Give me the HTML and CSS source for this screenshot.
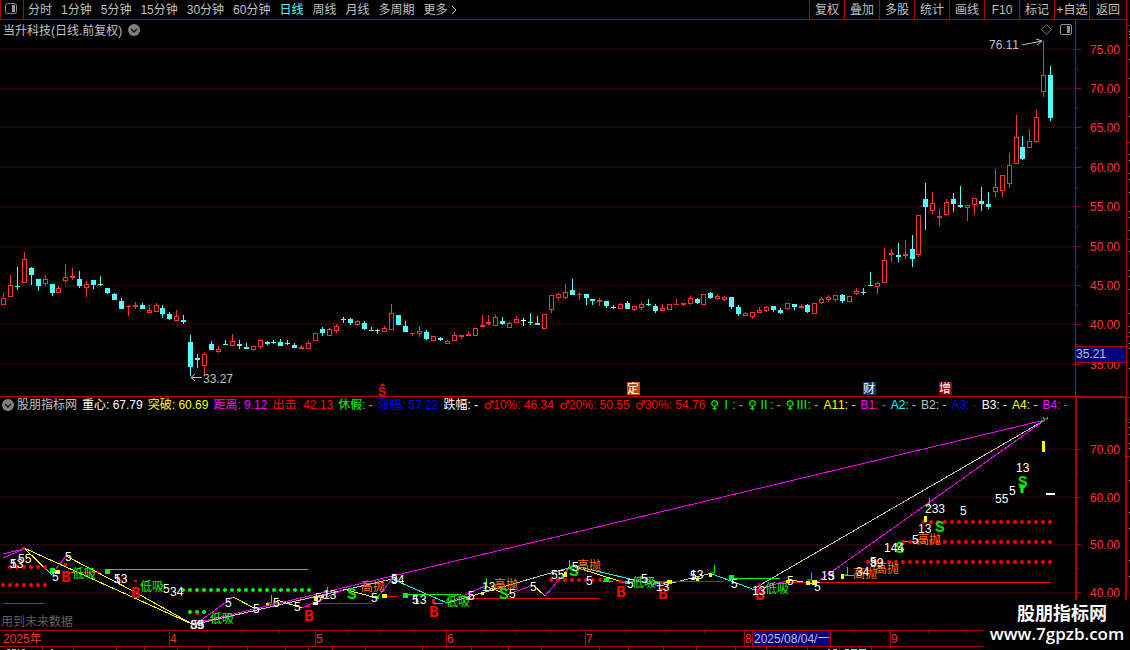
FILE: index.html
```html
<!DOCTYPE html>
<html lang="zh-CN">
<head>
  <meta charset="UTF-8">
  <title>当升科技 日线</title>
  <link rel="stylesheet" href="styles.css">
</head>
<body>
  <div class="terminal">
    <main class="main">
      <nav class="toolbar">
        <button class="side-toggle" aria-label="侧栏">
          <svg width="12" height="12" viewBox="0 0 12 12"><rect x="0.5" y="0.5" width="11" height="10" rx="2" fill="none" stroke="#888"/><rect x="7" y="2" width="3" height="7" fill="#999"/></svg>
        </button>
        <div class="periods">
          <button>分时</button>
          <button>1分钟</button>
          <button>5分钟</button>
          <button>15分钟</button>
          <button>30分钟</button>
          <button>60分钟</button>
          <button class="active">日线</button>
          <button>周线</button>
          <button>月线</button>
          <button>多周期</button>
          <button class="more">更多<svg width="6" height="10" viewBox="0 0 6 10"><path d="M1 1l4 4-4 4" fill="none" stroke="#c0c0c0"/></svg></button>
        </div>
        <div class="tools">
          <button>复权</button>
          <button>叠加</button>
          <button>多股</button>
          <button>统计</button>
          <button>画线</button>
          <button>F10</button>
          <button>标记</button>
          <button>+自选</button>
          <button>返回</button>
        </div>
      </nav>

      <section class="panel price">
        <div class="chart">
          <header class="title">
            <span>当升科技(日线.前复权)</span>
            <button class="fold" aria-label="展开">
              <svg width="12" height="12" viewBox="0 0 12 12"><circle cx="6" cy="6" r="6" fill="#808080"/><path d="M3 5l3 3 3-3" fill="none" stroke="#111" stroke-width="1.4"/></svg>
            </button>
            <div class="title-icons">
              <svg width="11" height="11" viewBox="0 0 11 11"><path d="M5.5 .7l4.8 4.8-4.8 4.8L.7 5.5z" fill="none" stroke="#808080"/></svg>
              <svg width="12" height="12" viewBox="0 0 12 12"><rect x="0.5" y="0.5" width="11" height="10" rx="1.5" fill="none" stroke="#909090"/><rect x="7" y="2" width="3" height="7" fill="#909090"/></svg>
            </div>
          </header>
          <svg class="plot price-plot" id="pricePlot" viewBox="0 39 1075 357" preserveAspectRatio="xMaxYMin meet"></svg>
        </div>
        <svg class="axis" id="priceAxis" viewBox="1075 20 51 376" width="51" height="376"></svg>
      </section>

      <section class="panel indicator">
        <div class="chart">
          <header class="legend">
            <button class="fold" aria-label="展开">
              <svg width="12" height="12" viewBox="0 0 12 12"><circle cx="6" cy="6" r="6" fill="#808080"/><path d="M3 5l3 3 3-3" fill="none" stroke="#111" stroke-width="1.4"/></svg>
            </button>
            <div class="values">
              <span class="gray">股朋指标网</span>
              <span class="white">重心: 67.79</span>
              <span class="yellow">突破: 60.69</span>
              <span class="magenta">距离: 9.12</span>
              <span class="red">出击: 42.13</span>
              <span class="green">休假: -</span>
              <span class="blue">涨幅: 57.22</span>
              <span class="white">跌幅: -</span>
              <span class="red"><i>♂</i>10%: 46.34</span>
              <span class="red"><i>♂</i>20%: 50.55</span>
              <span class="red"><i>♂</i>30%: 54.76</span>
              <span class="green"><i>♀</i>Ⅰ: -</span>
              <span class="green"><i>♀</i>Ⅱ: -</span>
              <span class="green"><i>♀</i>Ⅲ: -</span>
              <span class="yellow">A11: -</span>
              <span class="magenta">B1: -</span>
              <span class="cyan">A2: -</span>
              <span class="gray">B2: -</span>
              <span class="blue">A3: -</span>
              <span class="white">B3: -</span>
              <span class="yellow">A4: -</span>
              <span class="magenta">B4: -</span>
            </div>
          </header>
          <svg class="plot signal-plot" id="signalPlot" viewBox="0 413 1075 217" preserveAspectRatio="xMaxYMin meet"></svg>
        </div>
        <svg class="axis" id="signalAxis" viewBox="1075 397 51 233" width="51" height="233"></svg>
      </section>

      <svg class="dates" id="dates" viewBox="0 630 1126 20" preserveAspectRatio="xMaxYMin meet"></svg>
    </main>
    <svg class="edge" id="edge" viewBox="1127 0 3 650" width="3" height="650"></svg>
    <div class="brand">
      <strong>股朋指标网</strong>
      <span>www.7gpzb.com</span>
    </div>
  </div>
  <script src="chart.js"></script>
</body>
</html>
```

FILE: styles.css
```css
body { margin: 0; background: #000; overflow: hidden; font-family: "Liberation Sans", "Noto Sans CJK SC", sans-serif; font-size: 12px; font-kerning: none; color: #c0c0c0; }
button { background: none; border: 0; padding: 0; margin: 0; font: inherit; color: inherit; cursor: pointer; }
svg { display: block; flex: none; }
.terminal { position: relative; display: grid; grid-template-columns: minmax(0, 1fr) 3px; }
.main { border-right: 1px solid #b00000; }

/* toolbar */
.toolbar { display: flex; height: 19px; line-height: 18px; border-bottom: 1px solid #b00000; white-space: nowrap; }
.side-toggle { width: 24px; padding: 3px 0 0 4px; box-sizing: border-box; border-left: 1px solid #b00000; border-right: 1px solid #b00000; display: flex; }
.periods { display: flex; gap: 9px; margin-left: 4px; }
.active { color: #54ffff; }
.more { display: flex; align-items: center; gap: 3px; }
.tools { display: flex; margin-left: auto; }
.tools button { width: 35px; border-left: 1px solid #b00000; }
.tools button:last-child { width: 37px; }

/* panels */
.panel { display: grid; grid-template-columns: minmax(0, 1fr) 51px; }
.price { border-bottom: 1px solid #b00000; }
.title { display: flex; align-items: center; height: 19px; padding: 0 3px; gap: 6px; }
.title-icons { display: flex; gap: 8px; margin-left: auto; }
.legend { display: flex; align-items: center; height: 16px; padding-left: 2px; gap: 3px; line-height: 16px; white-space: nowrap; }
.values { display: flex; gap: 5px; }
.values i { display: inline-block; width: 10px; font: 12px/12px "DejaVu Sans", sans-serif; }
.fold { display: flex; }
.plot { width: 100%; overflow: visible; }
.price-plot { height: 357px; }
.signal-plot { height: 217px; }
.dates { width: 100%; height: 20px; }

.white { color: #fff; }
.yellow { color: #ff0; }
.magenta { color: #f0f; }
.red { color: #f00; }
.green { color: #0f0; }
.blue { color: #0000ff; }
.cyan { color: #0ff; }
.gray { color: #c0c0c0; }

/* svg text */
.tick-label { fill: #ff3232; }
.note { fill: #c0c0c0; }
.dim { fill: #606060; }
.num { fill: #fff; }
.buy { fill: #0f0; }
.sell { fill: #ff7800; }
.mark-b, .mark-s { font: bold 16px "Liberation Mono", monospace; }
.mark-b { fill: #f00; }
.mark-s { fill: #00e000; }
.event { fill: #f00; font-weight: bold; }

/* site mark */
.brand { position: absolute; right: 0; bottom: 0; width: 146px; height: 50px; background: #000; color: #fff; text-align: center; line-height: 19px; padding-top: 5px; box-sizing: border-box; }
.brand strong, .brand span { display: block; font-size: 18px; }
.brand strong { padding-left: 10px; }
.brand span { font-family: "Open Sans", sans-serif; font-weight: 600; font-size: 17px; }
```

FILE: chart.js
```js
const RED = '#ff3232', LINE = '#b00000', CYAN = '#54ffff';
const NS = 'http://www.w3.org/2000/svg';

function add(parent, tag, attrs, text) {
  const el = document.createElementNS(NS, tag);
  for (const k in attrs) el.setAttribute(k, attrs[k]);
  if (text !== undefined) el.textContent = text;
  parent.appendChild(el);
  return el;
}
function rect(p, x, y, w, h, fill) {
  add(p, 'rect', { x, y, width: w, height: h, fill, 'shape-rendering': 'crispEdges' });
}
// y is the vertical middle of the text
function label(p, x, y, cls, text) {
  const big = cls.startsWith('mark-');
  add(p, 'text', { x, y: y + (big ? 5 : 4), class: cls }, text);
}
function poly(p, points, color) {
  add(p, 'polyline', { points, fill: 'none', stroke: color, 'shape-rendering': 'crispEdges' });
}
function grid(p, rows) {
  rows.forEach(y => add(p, 'line', { x1: 1, x2: 1075, y1: y + 0.5, y2: y + 0.5, stroke: LINE, 'stroke-dasharray': '1 3', 'shape-rendering': 'crispEdges' }));
}

const pricePlot = document.getElementById('pricePlot');
const signalPlot = document.getElementById('signalPlot');
const priceAxis = document.getElementById('priceAxis');
const signalAxis = document.getElementById('signalAxis');
const dates = document.getElementById('dates');
const edge = document.getElementById('edge');

// x, high, body top, body bottom, low, r = up / c = down / w = flat
const candles = `
3 293 298 305 305 r|10 275 285 297 297 r|17 267 286 287 290 c|24 252 259 283 283 r|31 267 268 275 285 c
38 279 279 286 291 c|45 275 279 284 286 r|52 284 284 293 296 c|58 286 288 293 293 r|65 264 277 281 283 r
72 268 276 278 280 r|79 271 279 286 288 c|86 281 284 288 297 r|93 280 280 285 289 c|100 276 284 285 286 c
107 288 288 293 294 c|114 293 294 300 300 c|121 298 301 309 309 c|128 305 306 307 316 r|135 302 305 307 309 r
142 303 305 309 309 c|149 305 310 313 313 r|156 303 305 312 312 r|162 305 308 314 318 c|169 312 314 319 320 c
176 310 316 321 321 r|183 315 320 322 324 c|190 335 342 367 376 c|197 354 358 360 368 c|204 352 354 366 375 r
211 341 344 350 350 c|218 346 349 352 353 r|225 340 344 345 345 c|232 334 341 346 346 r|239 340 344 346 349 c
246 343 347 349 349 c|253 346 346 350 351 r|260 340 340 347 349 r|267 341 342 344 345 c|273 340 342 343 344 c
280 339 342 346 346 c|287 340 343 344 345 c|294 343 345 348 348 c|301 345 347 349 349 r|308 341 343 349 349 r
315 333 333 341 341 r|322 327 329 333 336 c|329 328 329 336 336 r|336 324 326 331 333 r|343 317 319 320 323 c
350 318 319 323 325 c|357 320 321 325 326 r|364 321 323 329 330 c|371 327 330 331 331 c|377 329 330 331 334 c
384 326 328 332 332 r|391 304 313 330 330 r|398 315 315 325 325 c|405 321 326 332 332 c|412 333 333 334 336 r
419 326 331 334 337 r|426 330 332 339 340 c|433 336 336 341 341 r|440 337 338 340 341 c|447 340 341 344 344 r
454 332 335 341 341 r|461 335 335 337 339 r|468 331 334 336 336 r|475 328 328 336 336 r|482 315 325 327 327 r
488 315 322 324 325 r|495 315 317 326 326 r|502 317 321 324 325 c|509 322 323 328 328 r|516 316 319 323 323 r
523 318 320 321 326 w|530 313 322 323 325 c|537 316 323 325 325 c|544 314 314 329 329 r|551 295 295 310 313 r
558 293 294 298 300 r|565 284 292 298 299 r|572 279 290 295 295 c|579 292 294 295 300 r|586 294 294 298 305 c
592 299 299 301 305 c|599 298 300 302 306 r|606 301 301 306 308 c|613 305 307 308 309 c|620 303 304 309 309 r
627 301 303 309 309 c|634 306 306 310 311 r|641 302 304 308 310 r|648 299 304 305 306 c|655 304 306 311 313 c
662 304 308 311 311 r|669 304 304 310 310 r|676 299 304 305 305 r|683 303 303 305 306 r|690 296 298 304 305 r
697 298 299 303 304 c|703 294 294 305 305 r|710 292 293 298 299 c|717 294 296 299 300 r|724 296 297 300 301 r
731 297 297 307 309 c|738 305 307 314 316 c|745 312 313 316 316 r|752 312 312 317 319 r|759 307 310 313 313 r
766 306 307 311 312 r|773 306 306 310 312 c|780 308 310 313 314 c|787 303 303 309 310 r|794 304 304 307 310 c
801 304 306 308 309 r|807 304 305 312 313 c|814 303 303 314 314 r|821 297 299 303 304 r|828 295 297 300 302 r
835 295 295 300 302 r|842 294 295 301 303 c|849 296 296 302 302 r|856 288 291 294 295 r|863 288 292 293 295 c
870 272 285 286 286 c|877 282 283 287 294 r|884 248 260 283 283 r|891 249 253 255 262 r|898 243 255 257 262 c
905 240 254 256 259 r|912 235 249 259 267 c|918 215 215 255 257 r|925 183 199 207 230 c|932 192 203 211 214 r
939 209 216 218 226 r|946 199 202 215 216 r|953 193 199 204 212 c|960 186 205 207 208 c|967 205 205 208 221 r
974 198 198 205 215 r|981 187 201 204 211 c|988 192 204 207 209 c|995 169 187 192 197 r|1002 175 175 191 197 r
1009 153 165 184 188 r|1016 115 137 164 164 r|1022 136 147 159 160 c|1029 129 141 148 148 r|1036 110 117 142 143 r
1043 41 75 92 97 r|1050 66 75 118 121 c`;

// ---- price chart ----
grid(pricePlot, [49, 88, 127, 167, 206, 246, 285, 324, 364]);
candles.trim().split(/[|\n]/).forEach(row => {
  const c = row.split(' ');
  const [x, high, top, bottom, low] = c.map(Number);
  const color = { r: RED, c: CYAN, w: '#fff' }[c[5]];
  rect(pricePlot, x, high, 1, top - high, color);
  rect(pricePlot, x, bottom, 1, low - bottom, color);
  rect(pricePlot, x - 2, top, 5, bottom - top, color);
  if (c[5] === 'r' && bottom - top > 2) rect(pricePlot, x - 1, top + 1, 3, bottom - top - 2, '#000');
});
label(pricePlot, 989, 45, 'note', '76.11');
add(pricePlot, 'path', { d: 'M1022 45l20-4M1036 39l6 2-5 4', fill: 'none', stroke: '#c0c0c0' });
label(pricePlot, 203, 379, 'note', '33.27');
add(pricePlot, 'path', { d: 'M202 377.5h-11M195 374l-4 3.5 4 3.5', fill: 'none', stroke: '#c0c0c0' });
[[627, '定', '#c04a10'], [863, '财', '#003a70'], [939, '增', '#8b0000']].forEach(([x, t, bg]) => {
  rect(pricePlot, x, 382, 13, 13, bg);
  add(pricePlot, 'text', { x, y: 393, class: 'num' }, t);
});
add(pricePlot, 'path', { d: 'M382.5 383l-3 3h6z', fill: '#f00' });
add(pricePlot, 'text', { x: 378, y: 396, class: 'event' }, 'S');

rect(priceAxis, 1075, 20, 1, 376, LINE);
[[49, '75.00'], [88, '70.00'], [127, '65.00'], [167, '60.00'], [206, '55.00'], [246, '50.00'], [285, '45.00'], [324, '40.00'], [364, '35.00']].forEach(([y, t]) => {
  rect(priceAxis, 1076, y, 5, 1, LINE);
  if (y < 350) rect(priceAxis, 1076, y + 20, 2, 1, LINE);
  label(priceAxis, 1090, y + 1, 'tick-label', t);
});
rect(priceAxis, 1076, 346, 50, 17, LINE);
rect(priceAxis, 1076, 347, 50, 15, '#000080');
label(priceAxis, 1076, 354, 'note', '35.21');

// ---- indicator chart ----
grid(signalPlot, [449, 497, 544, 592]);
[
  ['24,548 192,624', '#ff0'],
  ['3,554 24,549', '#f0f'],
  ['3,558 24,549', '#f0f'],
  ['24,548 52,575', '#ff0'],
  ['52,574 66,556', '#f0f'],
  ['66,556 133,591 192,624', '#ff0'],
  ['196,624 392,579', '#c0c0c0'],
  ['196,624 233,597', '#f0f'],
  ['233,597 256,609', '#ff0'],
  ['256,609 277,603', '#f0f'],
  ['277,600 302,608', '#ff0'],
  ['302,608 343,590', '#f0f'],
  ['196,623 1045,420', '#f0f'],
  ['343,589 377,598', '#ff0'],
  ['377,598 392,579', '#f0f'],
  ['392,579 447,603', '#0ff'],
  ['447,603 485,586', '#f0f'],
  ['447,603 575,566', '#c0c0c0'],
  ['485,586 509,595', '#ff0'],
  ['509,594 533,585', '#f0f'],
  ['533,585 545,596', '#ff0'],
  ['545,596 570,567', '#f0f'],
  ['575,567 622,582', '#ff0'],
  ['575,566 660,586', '#0ff'],
  ['622,582 630,583 645,577 658,587', '#f0f'],
  ['660,586 712,573', '#c0c0c0'],
  ['712,574 755,590', '#0ff'],
  ['755,588 1045,420', '#c0c0c0'],
  ['755,590 790,580', '#f0f'],
  ['790,580 816,584', '#ff0'],
  ['816,583 1045,420', '#f0f']
].forEach(([pts, color]) => poly(signalPlot, pts, color));

// horizontal levels: x1, x2, y, color
[
  [3, 45, 603, '#f00'], [62, 100, 572, '#f00'], [105, 308, 569, '#0f0'], [314, 371, 603, '#f00'],
  [385, 398, 596, '#f00'], [405, 461, 594, '#0f0'], [433, 443, 603, '#0f0'], [467, 599, 598, '#f00'],
  [603, 613, 581, '#0f0'], [620, 724, 581, '#f00'], [732, 780, 578, '#0f0'], [788, 1050, 582, '#f00'],
  [845, 854, 575, '#ff7800'], [905, 915, 541, '#ff7800']
].forEach(([x1, x2, y, color]) => rect(signalPlot, x1, y, x2 - x1, 1, color));

// dotted levels: first x, last x, y, color
[
  [10, 45, 567, '#f00'], [3, 45, 585, '#f00'], [183, 309, 590, '#0f0'], [190, 204, 612, '#0f0'],
  [551, 600, 580, '#f00'], [924, 1050, 522, '#f00'], [903, 1050, 542, '#f00'], [868, 1050, 562, '#f00']
].forEach(([x1, x2, y, color]) => {
  for (let x = x1; x <= x2; x += 7) add(signalPlot, 'circle', { cx: x, cy: y, r: 2, fill: color });
});

const Y = '#ff0', G = '#0f0', R = '#f00', W = '#fff';
[
  [50, 568, 5, 5, G], [55, 570, 5, 4, Y], [105, 569, 5, 5, G], [64, 563, 3, 3, R], [134, 580, 3, 2, R],
  [22, 547, 3, 3, R], [196, 613, 3, 2, R], [266, 603, 3, 2, Y], [314, 597, 4, 4, Y], [313, 602, 5, 3, W],
  [307, 604, 3, 3, R], [321, 595, 3, 3, Y], [375, 596, 4, 3, G], [382, 594, 5, 4, Y], [403, 593, 5, 5, G],
  [432, 599, 3, 4, R], [466, 597, 4, 3, Y], [481, 592, 3, 3, Y], [564, 572, 3, 5, Y], [604, 578, 5, 3, G],
  [619, 580, 3, 3, R], [625, 581, 5, 3, G], [654, 581, 4, 3, G], [661, 581, 3, 3, R], [667, 580, 5, 3, Y],
  [696, 578, 3, 3, Y], [709, 573, 3, 4, Y], [729, 575, 5, 5, G], [758, 583, 3, 3, R], [786, 580, 4, 3, Y],
  [806, 581, 4, 4, Y], [812, 580, 5, 5, Y], [841, 574, 3, 5, Y], [924, 516, 3, 6, Y],
  [1042, 441, 3, 11, Y], [1046, 493, 9, 2, W]
].forEach(b => rect(signalPlot, ...b));

// small hooks: x, top, height
[[271, 595, 8], [327, 587, 8], [486, 578, 10], [569, 560, 9], [714, 565, 8], [811, 573, 7], [847, 567, 8], [929, 498, 8]].forEach(([x, y, h]) => {
  add(signalPlot, 'path', { d: `M${x + 0.5} ${y}v${h}h-4`, fill: 'none', stroke: G });
});
add(signalPlot, 'path', { d: 'M1043.5 417v2h4v-2', fill: 'none', stroke: G });

[[140, 587], [72, 574], [210, 619], [446, 602], [632, 583], [765, 589]].forEach(([x, y]) => label(signalPlot, x, y, 'buy', '低吸'));
[[361, 587], [494, 585], [577, 566], [853, 574], [875, 569], [917, 540]].forEach(([x, y]) => label(signalPlot, x, y, 'sell', '高抛'));
[[61, 577], [131, 593], [304, 616], [429, 612], [616, 592], [658, 594], [755, 595]].forEach(([x, y]) => label(signalPlot, x, y, 'mark-b', 'B'));
[[347, 594], [499, 594], [569, 571], [895, 548], [935, 527], [1018, 482]].forEach(([x, y]) => label(signalPlot, x, y, 'mark-s', 'S'));
add(signalPlot, 'path', { d: 'M1022.5 484l3 4h-2v5h-3v-5h-2z', fill: G });
[
  [18, 559, '55'], [10, 564, '13'], [10, 564, '5'], [65, 557, '5'], [52, 577, '5'], [114, 579, '13'], [114, 579, '5'],
  [163, 589, '5'], [170, 592, '34'], [190, 625, '89'], [191, 625, '55'], [225, 603, '5'], [253, 609, '5'],
  [273, 603, '5'], [294, 607, '5'], [315, 598, '5'], [323, 595, '13'], [371, 598, '5'], [391, 580, '34'],
  [391, 579, '5'], [413, 600, '13'], [412, 600, '5'], [468, 596, '5'], [482, 587, '13'], [509, 594, '5'],
  [530, 587, '5'], [551, 575, '55'], [572, 567, '5'], [586, 581, '5'], [627, 584, '5'], [641, 579, '5'],
  [656, 587, '13'], [690, 575, '13'], [690, 576, '5'], [731, 584, '5'], [752, 591, '13'], [787, 581, '5'],
  [814, 587, '5'], [821, 576, '13'], [828, 576, '5'], [856, 572, '34'], [870, 563, '89'], [870, 562, '5'],
  [884, 548, '144'], [912, 540, '5'], [918, 529, '13'], [925, 509, '233'], [960, 511, '5'],
  [995, 499, '55'], [1009, 491, '5'], [1016, 468, '13']
].forEach(([x, y, t]) => label(signalPlot, x, y, 'num', t));
label(signalPlot, 1, 622, 'dim', '用到未来数据');

rect(signalAxis, 1075, 397, 2, 233, LINE);
rect(signalAxis, 1075, 397, 51, 1, LINE);
rect(signalAxis, 1125, 397, 1, 233, LINE);
[[449, '70.00'], [497, '60.00'], [544, '50.00'], [592, '40.00']].forEach(([y, t]) => {
  rect(signalAxis, 1077, y, 4, 1, LINE);
  rect(signalAxis, 1077, y + 24, 1, 1, LINE);
  label(signalAxis, 1090, y + 1, 'tick-label', t);
});

// ---- time axis ----
rect(dates, 0, 630, 1126, 1, LINE);
rect(dates, 0, 646, 1126, 1, LINE);
[205, 242, 279, 347, 380, 413, 481, 516, 550, 625, 665, 704, 854, 928, 966].forEach(x => rect(dates, x, 631, 1, 2, LINE));
[42, 73, 116, 144, 177, 208, 247, 285, 308, 332, 365, 422, 471, 508, 541, 599, 628, 663, 696, 735, 766, 807, 839, 871].forEach(x => rect(dates, x, 647, 1, 3, LINE));
[[3, '2025年'], [170, '4'], [316, '5'], [447, '6'], [586, '7'], [745, '8'], [891, '9']].forEach(([x, t], i) => {
  if (i) rect(dates, x - 1, 630, 1, 17, LINE);
  label(dates, x, 639, 'tick-label', t);
});
rect(dates, 752, 631, 79, 15, LINE);
rect(dates, 753, 631, 77, 15, '#000080');
label(dates, 754, 639, 'note', '2025/08/04/一');
[[7, 3], [12, 4], [18, 1], [22, 3], [51, 2], [828, 2], [833, 4]].forEach(([x, w]) => rect(dates, x, 649, w, 1, '#c0c0c0'));
[[845, 4], [851, 6], [859, 7]].forEach(([x, w]) => rect(dates, x, 649, w, 1, CYAN));

// ---- right edge ruler ----
[25, 45, 142, 239, 336, 397, 419, 456].forEach(y => rect(edge, 1127, y, 3, 1, LINE));
[31, 34, 37, 59, 78, 97, 116, 154, 160, 173, 179, 192, 211, 217, 230, 251, 270, 276, 289, 313, 326, 332, 343, 348, 368, 422, 427, 434, 443, 448, 480, 512, 528, 560, 576].forEach(y => rect(edge, 1129, y, 1, 1, '#c0c0c0'));
```
